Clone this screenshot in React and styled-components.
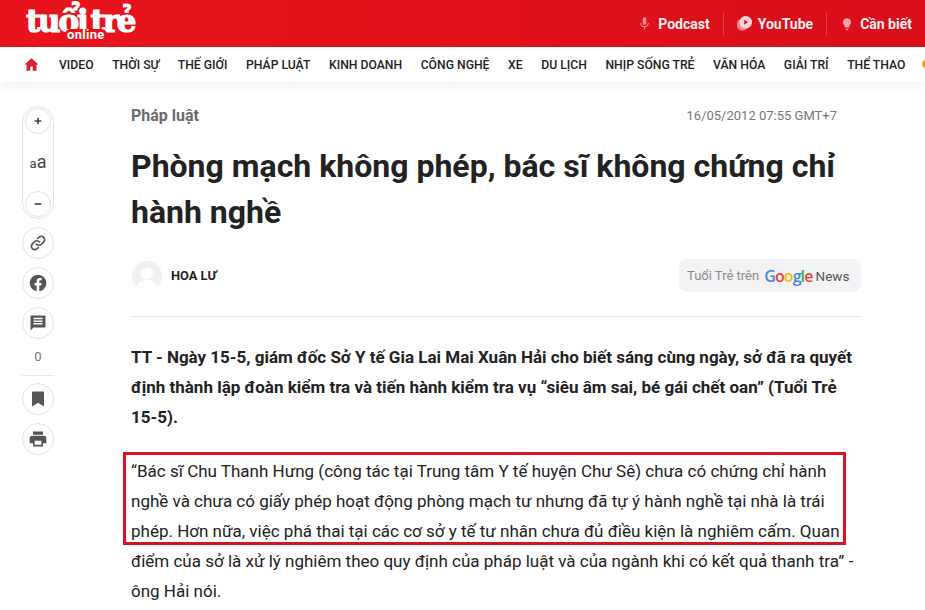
import React from 'react';
import styled, { createGlobalStyle } from 'styled-components';

const GlobalStyle = createGlobalStyle`
  html, body {
    margin: 0;
    padding: 0;
    background: #fff;
    overflow: hidden;
    font-family: Roboto, "Liberation Sans", sans-serif;
  }
`;

const Page = styled.div`
  position: relative;
  width: 925px;
  height: 610px;
  overflow: hidden;
`;

//HEADER
const TopBar = styled.header`
  display: flex;
  align-items: center;
  justify-content: space-between;
  height: 47px;
  padding: 0 13px 0 26px;
  background: linear-gradient(90deg, #e8141c 0%, #d90f1b 100%);
`;

const Logo = styled.div`
  position: relative;
  width: 112px;
  height: 47px;
  color: #fff;
`;

const LogoWord = styled.span`
  display: block;
  padding-top: 3px;
  font-family: "DejaVu Serif", "Liberation Serif", serif;
  font-weight: 700;
  font-size: 31px;
  line-height: 36px;
  letter-spacing: -2.2px;
  word-spacing: -4.5px;
  white-space: nowrap;
  -webkit-text-stroke: 1.2px #fff;
`;

const LogoSub = styled.span`
  position: absolute;
  left: 39px;
  top: 29px;
  padding: 0 2px;
  border-radius: 6px;
  background: #e8141c;
  font-size: 13px;
  line-height: 11px;
  font-weight: 700;
  letter-spacing: 0.3px;
`;

const TopLinks = styled.div`
  display: flex;
  align-items: center;
`;

const TopLink = styled.a`
  display: flex;
  align-items: center;
  gap: 6px;
  height: 22px;
  padding: 0 ${props => props.$last ? '0' : '13px'} 0 13px;
  border-right: ${props => props.$last ? 'none' : '1px solid #e5414a'};
  color: #fdeeee;
  font-size: 14px;
  font-weight: 700;
`;

const NavBar = styled.nav`
  position: relative;
  display: flex;
  align-items: center;
  gap: 18.6px;
  height: 35px;
  padding-left: 24px;
  background: #fff;
  box-shadow: 0 4px 10px rgba(0, 0, 0, 0.05);
  white-space: nowrap;
`;

const HomeLink = styled.a`
  display: flex;
  width: 15px;
  margin-right: 1.4px;
`;

const NavLink = styled.a`
  color: #222;
  font-size: 12.2px;
  font-weight: 500;
`;

const NavDot = styled.span`
  position: absolute;
  left: 922px;
  top: 13px;
  width: 8px;
  height: 8px;
  border-radius: 50%;
  background: #f0a030;
`;

//BODY
const Content = styled.main`
  display: flex;
  align-items: flex-start;
  padding-left: 22px;
`;

const SideBar = styled.aside`
  display: flex;
  flex: none;
  flex-direction: column;
  align-items: center;
  gap: 8px;
  width: 32px;
  margin-top: 24px;
  margin-right: 77px;
`;

const FontGroup = styled.div`
  display: flex;
  flex-direction: column;
  align-items: center;
  justify-content: space-between;
  box-sizing: border-box;
  width: 32px;
  height: 113px;
  padding: 1px 0;
  border: 1px solid #e4e4e4;
  border-radius: 16px;
`;

const RoundButton = styled.button`
  display: flex;
  align-items: center;
  justify-content: center;
  box-sizing: border-box;
  width: ${props => props.$small ? '26px' : '32px'};
  height: ${props => props.$small ? '26px' : '32px'};
  padding: 0;
  border: 1px solid #e4e4e4;
  border-radius: 50%;
  background: #fff;
  color: #555;
`;

const FontSizeLabel = styled.span`
  color: #444;
  font-size: 13px;
  line-height: 18px;

  b {
    font-size: 18px;
    font-weight: 400;
  }
`;

const CommentCount = styled.span`
  margin-top: 1px;
  color: #777;
  font-size: 13px;
  line-height: 18px;
`;

const SideDivider = styled.hr`
  width: 32px;
  margin: 1px 0 -1px;
  border: none;
  border-top: 1px solid #e8e8e8;
`;

const Article = styled.article`
  width: 730px;
`;

const MetaRow = styled.div`
  display: flex;
  align-items: center;
  justify-content: space-between;
  height: 20px;
  margin-top: 23px;
  padding-right: 24px;
`;

const Category = styled.a`
  color: #6b6b6b;
  font-size: 16px;
  font-weight: 700;
`;

const DateText = styled.span`
  color: #777;
  font-size: 13px;
`;

const Title = styled.h1`
  margin: 18px 0 0;
  color: #222;
  font-size: 32px;
  font-weight: 700;
  line-height: 46px;
`;

const AuthorRow = styled.div`
  display: flex;
  align-items: center;
  justify-content: space-between;
  height: 33px;
  margin-top: 24px;
  padding-bottom: 24px;
  border-bottom: 1px solid #e4e4e4;
`;

const Author = styled.div`
  display: flex;
  align-items: center;
  gap: 9px;
  padding-left: 1px;
  color: #222;
  font-size: 12.8px;
  font-weight: 700;
`;

const Avatar = styled.span`
  display: flex;
  width: 30px;
  height: 30px;
`;

const NewsBadge = styled.a`
  display: flex;
  align-items: center;
  box-sizing: border-box;
  width: 182px;
  height: 33px;
  padding-left: 8px;
  border-radius: 8px;
  background: #f2f3f5;
  color: #8a8a8a;
  font-size: 13px;
`;

const GoogleWord = styled.span`
  margin-left: 5px;
  font-family: "Open Sans", Roboto, sans-serif;
  font-size: 16px;
  font-weight: 600;
  letter-spacing: -0.9px;
`;

const Letter = styled.span`
  color: ${props => props.$color};
`;

const NewsWord = styled.span`
  margin-left: 3px;
  color: #555;
  font-size: 13.5px;
`;

const Lead = styled.p`
  margin: 25px 0 0;
  color: #222;
  font-size: 17px;
  font-weight: 700;
  line-height: 30px;
`;

const Paragraph = styled.p`
  margin: 24px 0 0;
  color: #222;
  font-size: 17px;
  line-height: 30px;
`;

const Highlight = styled.div`
  position: absolute;
  left: 123px;
  top: 452px;
  box-sizing: border-box;
  width: 723px;
  height: 93px;
  border: 3px solid #d8121f;
`;

const NAV_ITEMS = ['VIDEO', 'THỜI SỰ', 'THẾ GIỚI', 'PHÁP LUẬT', 'KINH DOANH', 'CÔNG NGHỆ', 'XE', 'DU LỊCH', 'NHỊP SỐNG TRẺ', 'VĂN HÓA', 'GIẢI TRÍ', 'THỂ THAO'];

const GOOGLE_LETTERS = [['G', '#4285f4'], ['o', '#ea4335'], ['o', '#fbbc05'], ['g', '#4285f4'], ['l', '#34a853'], ['e', '#ea4335']];

const Glyph = ({ size = 16, fill = '#555', d }) => (
  <svg width={size} height={size} viewBox="0 0 24 24" fill={fill}><path d={d} /></svg>
);

const ICONS = {
  home: 'M12 2 1 12h3v10h6v-7h4v7h6V12h3z',
  mic: 'M12 14a3 3 0 0 0 3-3V5a3 3 0 0 0-6 0v6a3 3 0 0 0 3 3zm5.3-3c0 3-2.5 5.1-5.3 5.1S6.700 14 6.700 11H5c0 3.400 2.700 6.200 6 6.700V21h2v-3.300c3.300-.5 6-3.300 6-6.700z',
  bulb: 'M12 2a7 7 0 0 0-4 12.700V17a1 1 0 0 0 1 1h6a1 1 0 0 0 1-1v-2.300A7 7 0 0 0 12 2zM10 20h4v1.500a1 1 0 0 1-1 1h-2a1 1 0 0 1-1-1z',
  plus: 'M20 14h-6v6h-4v-6H4v-4h6V4h4v6h6z',
  minus: 'M20 14H4v-4h16z',
  facebook: 'M22 12a10 10 0 1 0-11.600 9.900v-7H7.900V12h2.500V9.800c0-2.500 1.500-3.900 3.800-3.900 1.100 0 2.200.2 2.200.2v2.500h-1.300c-1.200 0-1.600.8-1.600 1.600V12h2.800l-.4 2.900h-2.400v7A10 10 0 0 0 22 12z',
  comment: 'M21 2H3a1 1 0 0 0-1 1v19l4-4h15a1 1 0 0 0 1-1V3a1 1 0 0 0-1-1zM18 14H6v-2h12zm0-3.500H6v-2h12zM18 7H6V5h12z',
  bookmark: 'M5 2h14a1 1 0 0 1 1 1v19l-8-5-8 5V3a1 1 0 0 1 1-1z',
  print: 'M19 8H5a3 3 0 0 0-3 3v6h4v4h12v-4h4v-6a3 3 0 0 0-3-3zm-3 11H8v-5h8zM18 3H6v4h12z',
};

const LinkIcon = () => (
  <svg width="18" height="18" viewBox="0 0 24 24" fill="none" stroke="#555" strokeWidth="2.200" strokeLinecap="round">
    <path d="M10 13.500a4.500 4.500 0 0 0 6.500.3l3-3a4.500 4.500 0 0 0-6.400-6.400l-1.600 1.600" />
    <path d="M14 10.500a4.500 4.500 0 0 0-6.500-.3l-3 3a4.500 4.500 0 0 0 6.400 6.400l1.600-1.600" />
  </svg>
);

const YouTubeIcon = () => (
  <svg width="15" height="15" viewBox="0 0 24 24">
    <rect x="0" y="5" width="17" height="18" rx="7" fill="#f08a8e" />
    <circle cx="14" cy="10" r="10" fill="#fbd4d5" />
    <path d="M11.500 6v8l6-4z" fill="#e0141e" />
  </svg>
);

const AvatarIcon = () => (
  <svg width="30" height="30" viewBox="0 0 30 30">
    <circle cx="15" cy="15" r="15" fill="#f1f1f1" />
    <circle cx="15" cy="12.500" r="6" fill="#fff" />
    <path d="M4.500 26c2-5 6-7 10.500-7s8.500 2 10.500 7a15 15 0 0 1-21 0z" fill="#fff" />
  </svg>
);

export default function App() {
  return (
    <Page>
      <GlobalStyle />
      <TopBar>
        <Logo>
          <LogoWord>tuổi trẻ</LogoWord>
          <LogoSub>online</LogoSub>
        </Logo>
        <TopLinks>
          <TopLink><Glyph size={15} fill="#f08a8e" d={ICONS.mic} />Podcast</TopLink>
          <TopLink><YouTubeIcon />YouTube</TopLink>
          <TopLink $last><Glyph size={14} fill="#f5a5a8" d={ICONS.bulb} />Cần biết</TopLink>
        </TopLinks>
      </TopBar>
      <NavBar>
        <HomeLink><Glyph size={15} fill="#dd2030" d={ICONS.home} /></HomeLink>
        {NAV_ITEMS.map(item => <NavLink key={item}>{item}</NavLink>)}
        <NavDot />
      </NavBar>
      <Content>
        <SideBar>
          <FontGroup>
            <RoundButton $small><Glyph size={10} fill="#444" d={ICONS.plus} /></RoundButton>
            <FontSizeLabel>a<b>a</b></FontSizeLabel>
            <RoundButton $small><Glyph size={10} fill="#444" d={ICONS.minus} /></RoundButton>
          </FontGroup>
          <RoundButton><LinkIcon /></RoundButton>
          <RoundButton><Glyph size={20} d={ICONS.facebook} /></RoundButton>
          <RoundButton><Glyph size={18} d={ICONS.comment} /></RoundButton>
          <CommentCount>0</CommentCount>
          <SideDivider />
          <RoundButton><Glyph size={18} d={ICONS.bookmark} /></RoundButton>
          <RoundButton><Glyph size={20} d={ICONS.print} /></RoundButton>
        </SideBar>
        <Article>
          <MetaRow>
            <Category>Pháp luật</Category>
            <DateText>16/05/2012 07:55 GMT+7</DateText>
          </MetaRow>
          <Title>Phòng mạch không phép, bác sĩ không chứng chỉ hành nghề</Title>
          <AuthorRow>
            <Author>
              <Avatar><AvatarIcon /></Avatar>
              HOA LƯ
            </Author>
            <NewsBadge>
              Tuổi Trẻ trên
              <GoogleWord>
                {GOOGLE_LETTERS.map(([letter, color], i) => <Letter key={i} $color={color}>{letter}</Letter>)}
              </GoogleWord>
              <NewsWord>News</NewsWord>
            </NewsBadge>
          </AuthorRow>
          <Lead>TT - Ngày 15-5, giám đốc Sở Y tế Gia Lai Mai Xuân Hải cho biết sáng cùng ngày, sở đã ra quyết định thành lập đoàn kiểm tra và tiến hành kiểm tra vụ “siêu âm sai, bé gái chết oan” (Tuổi Trẻ 15-5).</Lead>
          <Paragraph>“Bác sĩ Chu Thanh Hưng (công tác tại Trung tâm Y tế huyện Chư Sê) chưa có chứng chỉ hành nghề và chưa có giấy phép hoạt động phòng mạch tư nhưng đã tự ý hành nghề tại nhà là trái phép. Hơn nữa, việc phá thai tại các cơ sở y tế tư nhân chưa đủ điều kiện là nghiêm cấm. Quan điểm của sở là xử lý nghiêm theo quy định của pháp luật và của ngành khi có kết quả thanh tra” - ông Hải nói.</Paragraph>
        </Article>
      </Content>
      <Highlight />
    </Page>
  );
}
